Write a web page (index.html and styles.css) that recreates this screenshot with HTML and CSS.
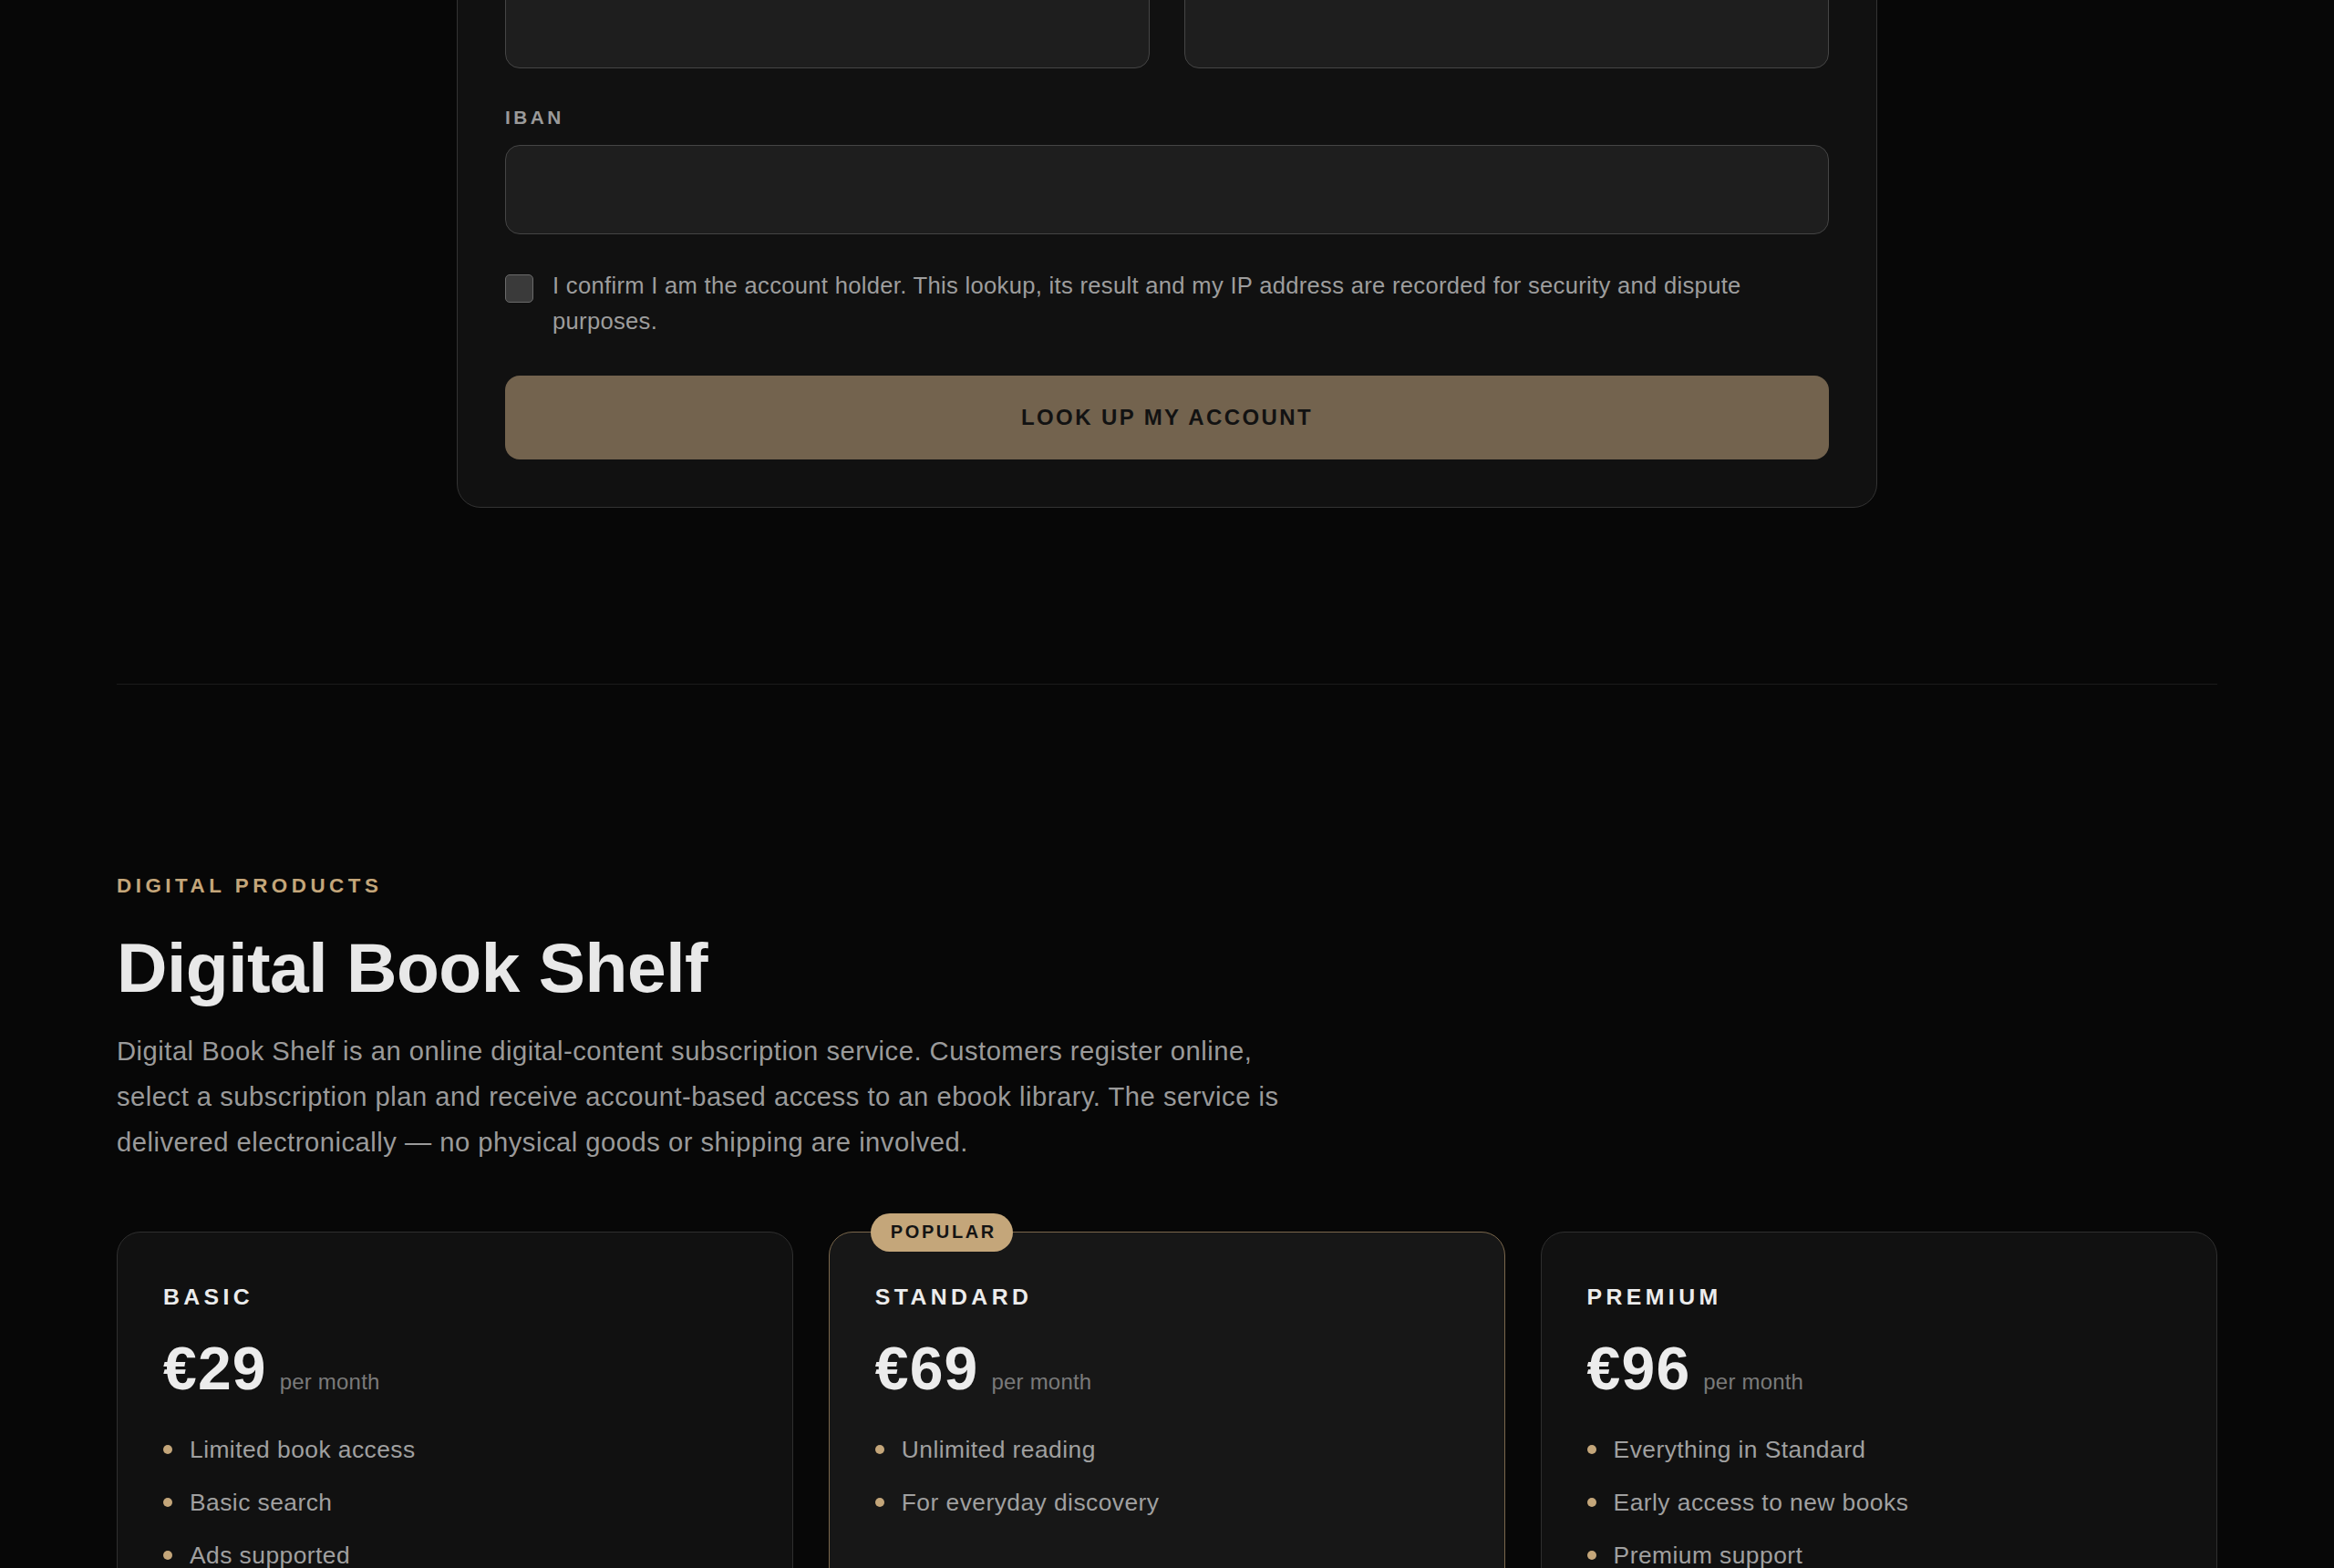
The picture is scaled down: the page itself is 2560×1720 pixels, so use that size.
FILE: index.html
```html
<!DOCTYPE html>
<html lang="en">
<head>
<meta charset="utf-8">
<title>Digital Book Shelf</title>
<link rel="stylesheet" href="styles.css">
</head>
<body>
<main class="wrap">
  <section class="lookup">
    <form class="form-card" onsubmit="return false">
      <div class="row-two">
        <input class="field" type="text" aria-label="Account holder">
        <input class="field" type="text" aria-label="BIC">
      </div>
      <label class="label" for="iban">IBAN</label>
      <input class="field" id="iban" type="text">
      <label class="confirm">
        <span class="box"></span>
        <span class="confirm-text">I confirm I am the account holder. This lookup, its result and my IP address are recorded for security and dispute purposes.</span>
      </label>
      <button class="btn" type="submit">Look up my account</button>
    </form>
  </section>

  <hr class="divider">

  <section class="products">
    <p class="eyebrow">Digital Products</p>
    <h2 class="title">Digital Book Shelf</h2>
    <p class="desc">Digital Book Shelf is an online digital-content subscription service. Customers register online, select a subscription plan and receive account-based access to an ebook library. The service is delivered electronically — no physical goods or shipping are involved.</p>

    <div class="plans">
      <article class="plan">
        <h3 class="plan-name">Basic</h3>
        <div class="price-row"><span class="price">€29</span><span class="per">per month</span></div>
        <ul class="features">
          <li>Limited book access</li>
          <li>Basic search</li>
          <li>Ads supported</li>
        </ul>
      </article>
      <article class="plan plan-popular">
        <span class="badge">Popular</span>
        <h3 class="plan-name">Standard</h3>
        <div class="price-row"><span class="price">€69</span><span class="per">per month</span></div>
        <ul class="features">
          <li>Unlimited reading</li>
          <li>For everyday discovery</li>
        </ul>
      </article>
      <article class="plan">
        <h3 class="plan-name">Premium</h3>
        <div class="price-row"><span class="price">€96</span><span class="per">per month</span></div>
        <ul class="features">
          <li>Everything in Standard</li>
          <li>Early access to new books</li>
          <li>Premium support</li>
        </ul>
      </article>
    </div>
  </section>
</main>
</body>
</html>
```
FILE: styles.css
```css
* { box-sizing: border-box; }

html, body {
  margin: 0;
  background: #070707;
  color: #e8e8e8;
  font-family: "Liberation Sans", Arial, Helvetica, sans-serif;
}

.wrap {
  max-width: 2304px;
  margin: 0 auto;
}

/* ---------- lookup form ---------- */
.lookup {
  padding-bottom: 193px;
}

.form-card {
  width: 1558px;
  margin: -76px auto 0;
  background: #111111;
  border: 1px solid #333333;
  border-radius: 26px;
  padding: 52px;
  display: flex;
  flex-direction: column;
}

.row-two {
  display: grid;
  grid-template-columns: 1fr 1fr;
  gap: 38px;
}

.field {
  display: block;
  width: 100%;
  height: 98px;
  background: #1e1e1e;
  border: 1px solid #454545;
  border-radius: 16px;
  margin: 0;
  padding: 0 26px;
  color: #e8e8e8;
  font: 400 25.6px "Liberation Sans", Arial, sans-serif;
  outline: none;
}

.label {
  display: block;
  margin: 38.2px 0 14.6px;
  font-size: 20.8px;
  line-height: 31.2px;
  font-weight: 700;
  letter-spacing: 3.5px;
  text-transform: uppercase;
  color: #9a9a9a;
}

.confirm {
  display: flex;
  align-items: flex-start;
  gap: 21px;
  margin-top: 36.6px;
  cursor: pointer;
}

.box {
  flex: none;
  width: 31px;
  height: 31px;
  margin-top: 7.4px;
  background: #3a3a3a;
  border: 1.5px solid #6a6a6a;
  border-radius: 5px;
}

.confirm-text {
  font-size: 25.6px;
  line-height: 39px;
  letter-spacing: 0.3px;
  color: #9d9d9d;
}

.btn {
  display: block;
  width: 100%;
  height: 92px;
  margin-top: 40.4px;
  border: 0;
  border-radius: 16px;
  background: #73634e;
  color: #121212;
  font: 700 24px "Liberation Sans", Arial, sans-serif;
  letter-spacing: 2.4px;
  text-transform: uppercase;
  cursor: pointer;
}

/* ---------- divider ---------- */
.divider {
  border: 0;
  height: 1px;
  margin: 0;
  background: #1b1b1b;
}

/* ---------- products ---------- */
.products {
  padding-top: 204px;
  padding-bottom: 160px;
}

.eyebrow {
  margin: 0;
  font-size: 22.4px;
  line-height: 33.6px;
  font-weight: 700;
  letter-spacing: 4.5px;
  text-transform: uppercase;
  color: #c4a67a;
}

.title {
  margin: 30.2px 0 0;
  font-size: 76.8px;
  line-height: 84.5px;
  font-weight: 700;
  letter-spacing: -0.5px;
  color: #e8e8e8;
}

.desc {
  margin: 24.6px 0 0;
  max-width: 1280px;
  font-size: 29.2px;
  line-height: 50px;
  letter-spacing: 0.5px;
  color: #9a9a9a;
}

.plans {
  margin-top: 72.7px;
  display: grid;
  grid-template-columns: repeat(3, 1fr);
  gap: 38.4px;
}

.plan {
  position: relative;
  background: #111111;
  border: 1px solid #2f2f2f;
  border-radius: 26px;
  padding: 55px 50px 64px;
}

.plan-popular {
  background: #171717;
  border-color: #7a674c;
}

.badge {
  position: absolute;
  top: -21px;
  left: 45px;
  height: 42px;
  display: flex;
  align-items: center;
  padding: 0 18px 0 22px;
  border-radius: 21px;
  background: #c4a67a;
  color: #141414;
  font-size: 20px;
  font-weight: 700;
  letter-spacing: 2.6px;
  text-transform: uppercase;
}

.plan-name {
  margin: 0;
  font-size: 24.8px;
  line-height: 32.2px;
  font-weight: 700;
  letter-spacing: 4.4px;
  text-transform: uppercase;
  color: #ececec;
}

.price-row {
  display: flex;
  align-items: baseline;
  gap: 14px;
  margin-top: 29.3px;
}

.price {
  font-size: 66px;
  line-height: 1;
  font-weight: 700;
  letter-spacing: 1.2px;
  color: #ececec;
}

.per {
  font-size: 24px;
  letter-spacing: 0.2px;
  color: #7a7a7a;
}

.features {
  list-style: none;
  margin: 37.3px 0 0;
  padding: 0;
}

.features li {
  display: flex;
  align-items: center;
  gap: 19px;
  font-size: 26.4px;
  line-height: 38px;
  letter-spacing: 0.45px;
  color: #a0a0a0;
  margin-bottom: 20px;
}

.features li::before {
  content: "";
  flex: none;
  width: 10px;
  height: 10px;
  border-radius: 50%;
  background: #c4a67a;
}
```
